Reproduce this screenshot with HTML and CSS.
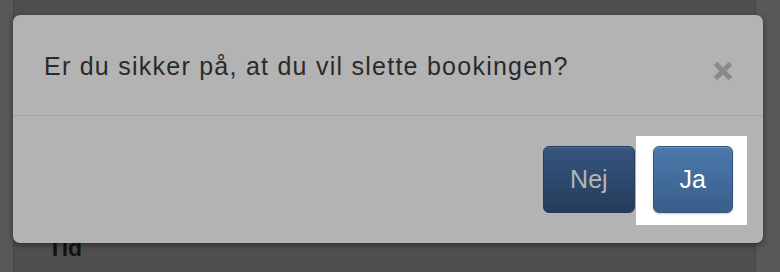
FILE: index.html
```html
<!DOCTYPE html>
<html lang="da">
<head>
<meta charset="utf-8">
<title>Slet booking</title>
<link rel="stylesheet" href="styles.css">
</head>
<body>
<div class="page">
  <h2 class="label">Tid</h2>
</div>
<div class="modal">
  <div class="modal-header">
    <h3 class="title">Er du sikker på, at du vil slette bookingen?</h3>
    <span class="close" aria-label="Luk">
      <svg width="22" height="22" viewBox="0 0 22 22"><path d="M3.5 3.5 L18.5 18.5 M18.5 3.5 L3.5 18.5" stroke="#8a8a8a" stroke-width="5" stroke-linecap="butt"/></svg>
    </span>
  </div>
  <div class="modal-footer">
    <button class="btn btn-no">Nej</button>
    <span class="spot"><button class="btn btn-yes">Ja</button></span>
  </div>
</div>
</body>
</html>
```
FILE: styles.css
```css
html, body {
  margin: 0;
  padding: 0;
}
body {
  width: 780px;
  height: 272px;
  overflow: hidden;
  background: #585858;
  font-family: "Liberation Sans", Arial, sans-serif;
}
.page {
  margin: 0 0 0 13px;
  width: 743px;
  height: 272px;
  background: #4f4f4f;
  border-left: 1px solid #474747;
  border-right: 1px solid #474747;
  box-sizing: border-box;
  padding: 234px 0 0 34px;
}
.label {
  margin: 0;
  font-size: 23px;
  line-height: 28px;
  font-weight: bold;
  color: #141414;
}
.modal {
  position: absolute;
  left: 13px;
  top: 15px;
  width: 750px;
  height: 228px;
  background: #b3b3b3;
  border-radius: 7px;
  box-shadow: 0 2px 6px rgba(0, 0, 0, 0.45);
  display: flex;
  flex-direction: column;
  overflow: hidden;
}
.modal-header {
  display: flex;
  justify-content: space-between;
  align-items: flex-start;
  padding: 36px 29px 0 31px;
  height: 101px;
  box-sizing: border-box;
  border-bottom: 1px solid #a2a2a2;
}
.title {
  margin: 0;
  font-size: 25px;
  line-height: 30px;
  font-weight: normal;
  letter-spacing: 1.25px;
  color: #2a2a2a;
}
.close {
  display: block;
  width: 22px;
  height: 22px;
  margin-top: 9px;
}
.close svg {
  display: block;
}
.modal-footer {
  flex: 1;
  display: flex;
  justify-content: flex-end;
  align-items: flex-start;
  padding: 30px 30px 0 30px;
}
.btn {
  display: block;
  height: 67px;
  padding: 0 26px;
  font-family: "Liberation Sans", Arial, sans-serif;
  font-size: 25px;
  line-height: 65px;
  border-radius: 6px;
  cursor: pointer;
}
.btn-no {
  color: #b6b6b6;
  background: linear-gradient(#36567f, #253c5b);
  border: 1px solid #223957;
  box-shadow: inset 0 1px 0 rgba(255, 255, 255, 0.12);
}
.spot {
  display: block;
  background: #ffffff;
  padding: 10px 14px 12px 17px;
  margin: -10px -14px -12px 1px;
}
.btn-yes {
  color: #ffffff;
  background: linear-gradient(#4c7aab, #395d8b);
  border: 1px solid #34557f;
  box-shadow: inset 0 1px 0 rgba(255, 255, 255, 0.18), 0 1px 2px rgba(0, 0, 0, 0.2);
}
```
